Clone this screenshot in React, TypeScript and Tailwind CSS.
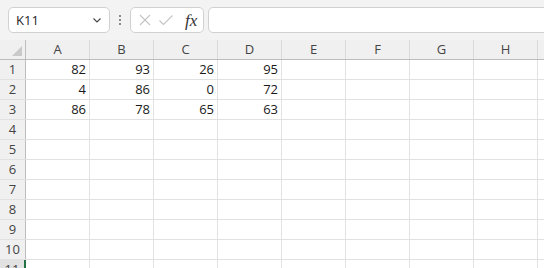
import React from "react";

const cols = ["A", "B", "C", "D", "E", "F", "G", "H", ""];
const data: Record<number, (number | null)[]> = {
  1: [82, 93, 26, 95],
  2: [4, 86, 0, 72],
  3: [86, 78, 65, 63],
};

export default function App() {
  const rows = Array.from({ length: 11 }, (_, i) => i + 1);
  return (
    <div
      className="w-[544px] h-[268px] overflow-hidden bg-white text-[#262626]"
      style={{ fontFamily: '"Open Sans", "Noto Sans", sans-serif' }}
    >
      {/* formula bar */}
      <div className="h-[40px] bg-[#f3f3f3] flex items-start pt-[7px] pl-[8px] gap-0">
        <div className="w-[102px] h-[26px] bg-white border border-[#d1d1d1] rounded-[5px] flex items-center justify-between pl-[7px] pr-[6px] shrink-0">
          <span className="text-[13px] leading-none text-[#1f1f1f]">K11</span>
          <svg width="12" height="12" viewBox="0 0 12 12">
            <path d="M2.5 4.5 L6 8 L9.5 4.5" fill="none" stroke="#444" strokeWidth="1.1" />
          </svg>
        </div>
        <div className="w-[20px] h-[26px] flex flex-col items-center justify-center gap-[2px] shrink-0">
          <div className="w-[2px] h-[2px] bg-[#8a8a8a]" />
          <div className="w-[2px] h-[2px] bg-[#8a8a8a]" />
          <div className="w-[2px] h-[2px] bg-[#8a8a8a]" />
        </div>
        <div className="w-[74px] h-[26px] bg-white border border-[#d1d1d1] rounded-[5px] flex items-center pl-[7px] shrink-0">
          <svg width="14" height="14" viewBox="0 0 14 14">
            <path d="M2 2 L12 12 M12 2 L2 12" stroke="#c4c4c4" strokeWidth="1.1" />
          </svg>
          <svg width="16" height="14" viewBox="0 0 16 14" className="ml-[6px]">
            <path d="M1.5 7.5 L5.5 11.5 L14.5 2.5" fill="none" stroke="#c4c4c4" strokeWidth="1.1" />
          </svg>
          <span
            className="ml-[11px] text-[17px] leading-none text-[#333] italic"
            style={{ fontFamily: '"Liberation Serif", serif' }}
          >
            fx
          </span>
        </div>
        <div className="ml-[4px] w-[345px] h-[26px] bg-white border border-[#d1d1d1] rounded-[5px] shrink-0" />
      </div>

      {/* column headers */}
      <div className="flex h-[20px] bg-[#f0f0f0] border-b border-[#bdbdbd]">
        <div className="w-[26px] h-full shrink-0 border-r border-[#bdbdbd] relative">
          <svg width="10" height="10" viewBox="0 0 10 10" className="absolute right-[3px] bottom-[3px]">
            <path d="M10 0 L10 10 L0 10 Z" fill="#c9c9c9" />
          </svg>
        </div>
        {cols.map((c, i) => (
          <div
            key={i}
            className="w-[64px] shrink-0 h-full border-r border-[#dadada] flex items-center justify-center text-[13px] text-[#444]"
          >
            {c}
          </div>
        ))}
      </div>

      {rows.map((r) => (
        <div key={r} className="flex h-[20px] border-b border-[#e1e1e1]">
          <div
            className={
              r === 11
                ? "w-[26px] shrink-0 h-full bg-[#e2e2e2] border-r-2 border-[#217346] flex items-center justify-center text-[13px] text-[#444]"
                : "w-[26px] shrink-0 h-full bg-[#f0f0f0] border-r border-[#bdbdbd] flex items-center justify-center text-[13px] text-[#444]"
            }
          >
            {r}
          </div>
          {cols.map((_, i) => {
            const v = data[r]?.[i];
            return (
              <div
                key={i}
                className="w-[64px] shrink-0 h-full border-r border-[#e1e1e1] flex items-center justify-end pr-[3px] text-[13px] text-[#1a1a1a]"
              >
                {v !== undefined && v !== null ? v : ""}
              </div>
            );
          })}
        </div>
      ))}
    </div>
  );
}
